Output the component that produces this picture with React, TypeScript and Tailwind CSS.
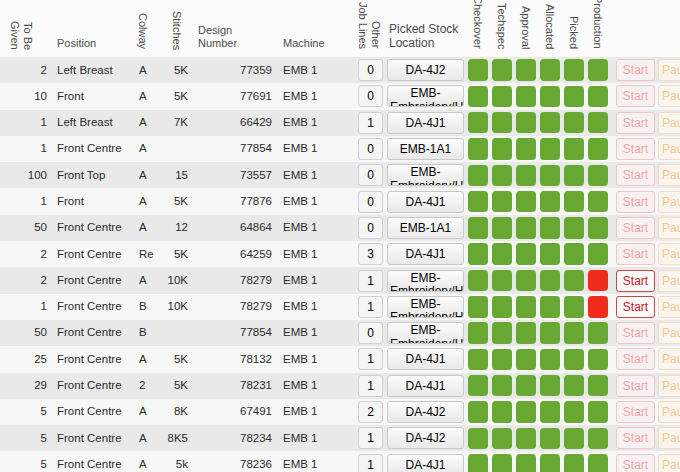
import React from "react";

type Row = {
  qty: number;
  position: string;
  colway: string;
  stitches: string;
  design: string;
  machine: string;
  other: number;
  location: string;
  ready?: boolean;
};

const EMB = "EMB-Embroidery/Hoops";

const rows: Row[] = [
  { qty: 2, position: "Left Breast", colway: "A", stitches: "5K", design: "77359", machine: "EMB 1", other: 0, location: "DA-4J2" },
  { qty: 10, position: "Front", colway: "A", stitches: "5K", design: "77691", machine: "EMB 1", other: 0, location: EMB },
  { qty: 1, position: "Left Breast", colway: "A", stitches: "7K", design: "66429", machine: "EMB 1", other: 1, location: "DA-4J1" },
  { qty: 1, position: "Front Centre", colway: "A", stitches: "", design: "77854", machine: "EMB 1", other: 0, location: "EMB-1A1" },
  { qty: 100, position: "Front Top", colway: "A", stitches: "15", design: "73557", machine: "EMB 1", other: 0, location: EMB },
  { qty: 1, position: "Front", colway: "A", stitches: "5K", design: "77876", machine: "EMB 1", other: 0, location: "DA-4J1" },
  { qty: 50, position: "Front Centre", colway: "A", stitches: "12", design: "64864", machine: "EMB 1", other: 0, location: "EMB-1A1" },
  { qty: 2, position: "Front Centre", colway: "Re", stitches: "5K", design: "64259", machine: "EMB 1", other: 3, location: "DA-4J1" },
  { qty: 2, position: "Front Centre", colway: "A", stitches: "10K", design: "78279", machine: "EMB 1", other: 1, location: EMB, ready: true },
  { qty: 1, position: "Front Centre", colway: "B", stitches: "10K", design: "78279", machine: "EMB 1", other: 1, location: EMB, ready: true },
  { qty: 50, position: "Front Centre", colway: "B", stitches: "", design: "77854", machine: "EMB 1", other: 0, location: EMB },
  { qty: 25, position: "Front Centre", colway: "A", stitches: "5K", design: "78132", machine: "EMB 1", other: 1, location: "DA-4J1" },
  { qty: 29, position: "Front Centre", colway: "2", stitches: "5K", design: "78231", machine: "EMB 1", other: 1, location: "DA-4J1" },
  { qty: 5, position: "Front Centre", colway: "A", stitches: "8K", design: "67491", machine: "EMB 1", other: 2, location: "DA-4J2" },
  { qty: 5, position: "Front Centre", colway: "A", stitches: "8K5", design: "78234", machine: "EMB 1", other: 1, location: "DA-4J2" },
  { qty: 5, position: "Front Centre", colway: "A", stitches: "5k", design: "78236", machine: "EMB 1", other: 1, location: "DA-4J1" },
];

const stages = ["Checkover", "Techspec", "Approval", "Allocated", "Picked", "Production"];

function VLabel({ children, className = "" }: { children: React.ReactNode; className?: string }) {
  return (
    <div className={`[writing-mode:vertical-rl] text-end whitespace-nowrap leading-[13px] ${className}`}>
      {children}
    </div>
  );
}

function Header() {
  return (
    <div className="flex h-[57px] items-end overflow-hidden bg-[#fbfbfb] text-[11px] text-[#4a4a4a]">
      <div className="w-[50px] shrink-0 pb-[7px] pl-[8px]">
        <VLabel className="leading-[13px]">
          To Be
          <br />
          Given
        </VLabel>
      </div>
      <div className="w-[85px] shrink-0 pb-[7px] pl-[7px] leading-[13px]">Position</div>
      <div className="w-[25px] shrink-0 pb-[8px] pl-[1px]">
        <VLabel>Colway</VLabel>
      </div>
      <div className="w-[35px] shrink-0 pb-[7px] pl-[10px]">
        <VLabel>Stitches</VLabel>
      </div>
      <div className="w-[82px] shrink-0 pb-[7px] pl-[3px] leading-[13px]">
        Design
        <br />
        Number
      </div>
      <div className="w-[78px] shrink-0 pb-[7px] pl-[6px] leading-[13px]">Machine</div>
      <div className="w-[30px] shrink-0 pb-[8px] pl-[1px]">
        <VLabel className="leading-[12px]">
          Other
          <br />
          Job Lines
        </VLabel>
      </div>
      <div className="w-[81px] shrink-0 pb-[7px] pl-[4px] text-[12px] leading-[14px]">
        Picked Stock
        <br />
        Location
      </div>
      {stages.map((s) => (
        <div key={s} className="w-[24px] shrink-0 pb-[8px] pl-[5px]">
          <VLabel>{s}</VLabel>
        </div>
      ))}
      <div className="flex-1" />
    </div>
  );
}

function DataRow({ row, index }: { row: Row; index: number }) {
  const long = row.location.length > 10;
  return (
    <div
      className={`flex h-[26.3px] items-center text-[11.5px] text-[#2b2b2b] ${
        index % 2 === 0 ? "bg-[#e9e9e9]" : "bg-[#f7f7f7]"
      }`}
    >
      <div className="w-[50px] shrink-0 pr-[3px] text-right">{row.qty}</div>
      <div className="w-[85px] shrink-0 pl-[7px] whitespace-nowrap">{row.position}</div>
      <div className="w-[25px] shrink-0 pl-[4px]">{row.colway}</div>
      <div className="w-[35px] shrink-0 pr-[7px] text-right">{row.stitches}</div>
      <div className="w-[82px] shrink-0 pr-[5px] text-right">{row.design}</div>
      <div className="w-[78px] shrink-0 pl-[6px]">{row.machine}</div>
      <div className="w-[30px] shrink-0 pl-[3px]">
        <div className="flex h-[22px] w-[25px] items-center justify-center rounded-[3px] border border-[#cfcfcf] bg-[#f5f5f5] text-[12px] text-black">
          {row.other}
        </div>
      </div>
      <div className="w-[81px] shrink-0 pl-[2px]">
        <div
          className={`h-[22px] w-[77px] overflow-hidden rounded-[3px] border border-[#c9c9c9] bg-gradient-to-b from-[#fbfbfb] to-[#e9e9e9] px-[2px] text-center text-[12px] text-black ${
            long ? "pt-[1px] leading-[13.5px]" : "pt-[2px] leading-[16px]"
          }`}
        >
          {row.location}
        </div>
      </div>
      {stages.map((s, i) => {
        const red = row.ready && i === stages.length - 1;
        return (
          <div key={s} className="w-[24px] shrink-0 pl-[2px]">
            <div className={`h-[21.5px] w-[20px] rounded-[4px] ${red ? "bg-[#f02d1d]" : "bg-[#66a832]"}`} />
          </div>
        );
      })}
      <div className="w-[46px] shrink-0 pl-[6px]">
        <div
          className={`flex h-[22px] w-[39px] items-center justify-center rounded-[3px] border text-[12px] ${
            row.ready
              ? "border-[#c64848] bg-[#fafafa] text-[#c8171d]"
              : "border-[#efc6c6] bg-[#f8f1f1] text-[#f1a6a6]"
          }`}
        >
          Start
        </div>
      </div>
      <div className="shrink-0 pl-[2px]">
        <div className="flex h-[22px] w-[44px] items-center rounded-[3px] border border-[#f6dcc0] bg-[#fbf5ef] pl-[3px] text-[12px] text-[#f5c78f]">
          Pause
        </div>
      </div>
    </div>
  );
}

export default function App() {
  return (
    <div className="h-[472px] w-[680px] overflow-hidden bg-[#fbfbfb] font-['Liberation_Sans',Arial,sans-serif]">
      <Header />
      {rows.map((row, i) => (
        <DataRow key={i} row={row} index={i} />
      ))}
    </div>
  );
}
